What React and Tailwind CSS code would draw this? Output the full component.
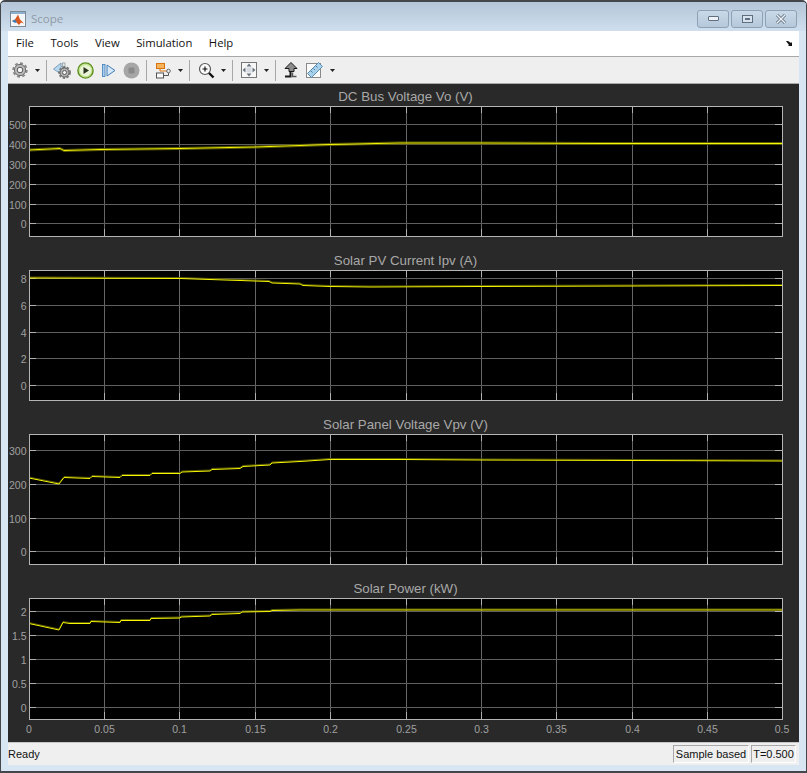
import React from "react";

const GRID_X = [104, 179, 255, 330, 406, 481, 556, 632, 707];
const LEFT = 29;
const RIGHT = 782;
const X_LABELS = ["0", "0.05", "0.1", "0.15", "0.2", "0.25", "0.3", "0.35", "0.4", "0.45", "0.5"];

const plots = [
  {
    title: "DC Bus Voltage Vo (V)",
    top: 106,
    bottom: 236,
    ticks: [["500", 124], ["400", 144], ["300", 164], ["200", 184], ["100", 204], ["0", 223]],
    zero: 223,
    ripple: [-1, 1],
    trace: [[29, 150], [60, 148.5], [64, 150.5], [100, 149.5], [180, 148.5], [255, 147], [330, 144.5], [400, 143], [480, 143], [600, 143.5], [782, 143.5]],
  },
  {
    title: "Solar PV Current Ipv (A)",
    top: 270,
    bottom: 400,
    ticks: [["8", 278], ["6", 305], ["4", 332], ["2", 358], ["0", 385]],
    zero: 385,
    ripple: [-1],
    trace: [[29, 278], [180, 278.5], [210, 279.5], [240, 280.5], [269, 281.5], [272, 283], [300, 284], [303, 285.5], [330, 286.5], [370, 287], [480, 286.5], [782, 285.5]],
  },
  {
    title: "Solar Panel Voltage Vpv (V)",
    top: 434,
    bottom: 564,
    ticks: [["300", 450], ["200", 484], ["100", 518], ["0", 551]],
    zero: 551,
    ripple: [-1],
    trace: [[29, 478], [59, 484], [64, 477.5], [90, 478.5], [92, 476.5], [120, 477.5], [122, 475.5], [150, 475.5], [152, 473.5], [180, 473.5], [182, 472], [210, 471], [212, 469.5], [240, 468.5], [243, 466.5], [270, 465], [272, 463], [300, 461.5], [330, 459.5], [400, 459.5], [480, 460], [782, 461]],
  },
  {
    title: "Solar Power (kW)",
    top: 598,
    bottom: 719,
    ticks: [["2", 611], ["1.5", 635], ["1", 659], ["0.5", 683], ["0", 707]],
    zero: 707,
    ripple: [-1],
    trace: [[29, 623.5], [59, 630], [63, 622.5], [70, 623.5], [90, 623.5], [91, 621.5], [120, 622.5], [121, 620.5], [150, 620.5], [151, 618.5], [180, 618], [181, 617], [210, 616], [212, 614.5], [240, 613.5], [242, 612], [270, 611.5], [272, 610.5], [300, 610], [782, 610]],
  },
];

function Plot({ plot, showX }) {
  const height = plot.bottom - plot.top + (showX ? 22 : 1);
  const pts = plot.trace.map((p) => p.join(",")).join(" ");
  return (
    <div>
      <div className="h-5 text-center text-[13.3px] leading-[21px] text-[#a8a8a8] pl-[21px] pr-[17px]">{plot.title}</div>
      <svg width="791" height={height} viewBox={`8 ${plot.top} 791 ${height}`} className="block" fontFamily="'Liberation Sans', sans-serif" fontSize="10.5">
        <rect x={LEFT} y={plot.top} width={RIGHT - LEFT} height={plot.bottom - plot.top} fill="#000" />
        {GRID_X.map((x) => (
          <g key={x}>
            <line x1={x + 0.5} x2={x + 0.5} y1={plot.top} y2={plot.bottom} stroke="#666" />
            <line x1={x + 0.5} x2={x + 0.5} y1={plot.top} y2={plot.top + 7} stroke="#b0b0b0" />
            <line x1={x + 0.5} x2={x + 0.5} y1={plot.bottom - 7} y2={plot.bottom} stroke="#b0b0b0" />
          </g>
        ))}
        {plot.ticks.map(([label, y]) => (
          <g key={label}>
            <line x1={LEFT} x2={RIGHT} y1={y + 0.5} y2={y + 0.5} stroke="#5e5e5e" />
            <line x1={LEFT} x2={LEFT + 7} y1={y + 0.5} y2={y + 0.5} stroke="#b0b0b0" />
            <line x1={RIGHT - 7} x2={RIGHT} y1={y + 0.5} y2={y + 0.5} stroke="#b0b0b0" />
            <text x="26.5" y={y + 5} textAnchor="end" fill="#a0a0a0">{label}</text>
          </g>
        ))}
        {plot.ripple.map((dy) => (
          <polyline key={dy} points={pts} transform={`translate(0 ${dy})`} fill="none" stroke="#5c5c08" strokeWidth="1" />
        ))}
        <polyline points={pts} fill="none" stroke="#f8f800" strokeWidth="1" />
        <line x1={LEFT + 0.5} x2={LEFT + 0.5} y1={plot.trace[0][1]} y2={plot.zero} stroke="#ffff00" />
        <rect x={LEFT + 0.5} y={plot.top + 0.5} width={RIGHT - LEFT} height={plot.bottom - plot.top} fill="none" stroke="#b4b4b4" />
        {showX &&
          X_LABELS.map((label, i) => (
            <text key={label} x={i === 0 ? LEFT : i === 10 ? RIGHT : GRID_X[i - 1] + 0.5} y={plot.bottom + 14} textAnchor="middle" fill="#a0a0a0">{label}</text>
          ))}
      </svg>
    </div>
  );
}

function Caret({ w = "w-2" }) {
  return (
    <div className={`${w} flex justify-center`}>
      <svg width="5" height="3" className="block"><path d="M0 0h5L2.5 3z" fill="#222" /></svg>
    </div>
  );
}

function Sep({ w }) {
  return (
    <div className={`${w} flex justify-center`}>
      <div className="h-[21px] w-px bg-[#a8a8a8]" />
    </div>
  );
}

function Cell({ w, children }) {
  return <div className={`${w} flex justify-center items-center`}>{children}</div>;
}

function ToolBar() {
  return (
    <div className="flex h-[27px] items-center bg-[#efefef] border-b border-[#a8a8a8]">
      <Cell w="w-6">
        <svg width="16" height="16" viewBox="0 0 16 16" className="block">
          <circle cx="8" cy="8" r="6.8" fill="none" stroke="#8a8a8a" strokeWidth="1.8" strokeDasharray="3 2.3" />
          <circle cx="8" cy="8" r="5.6" fill="#bcbcbc" stroke="#6a6a6a" />
          <circle cx="8" cy="8" r="2.8" fill="#f6f6f6" stroke="#555" />
        </svg>
      </Cell>
      <Caret w="w-2.5" />
      <Sep w="w-2" />
      <Cell w="w-6">
        <svg width="18" height="17" viewBox="0 0 18 17" className="block">
          <path d="M0.5 7L8 1v3.5h3V10H8v2z" fill="#b5d8f0" stroke="#7f9fb8" />
          <rect x="9.5" y="1" width="2.5" height="5" fill="#dfe6ec" stroke="#8a949c" strokeWidth="0.7" />
          <g transform="translate(5 4)"><circle cx="6.5" cy="6.5" r="5.6" fill="none" stroke="#777" strokeWidth="1.6" strokeDasharray="2.4 1.6" /><circle cx="6.5" cy="6.5" r="4.6" fill="#b2b2b2" stroke="#555" /><circle cx="6.5" cy="6.5" r="2" fill="#f4f4f4" stroke="#444" strokeWidth="0.8" /></g>
        </svg>
      </Cell>
      <Cell w="w-[23px]">
        <svg width="17" height="17" viewBox="0 0 17 17" className="block">
          <circle cx="8.5" cy="8.5" r="7.6" fill="#c3e394" stroke="#5f8f20" strokeWidth="1.4" />
          <circle cx="8.5" cy="8.5" r="5.6" fill="#eaf5d8" />
          <path d="M6.5 5v7l5.5-3.5z" fill="#2b3520" />
        </svg>
      </Cell>
      <Cell w="w-[23px]">
        <svg width="14" height="13" viewBox="0 0 14 13" className="block">
          <rect x="0.5" y="0.5" width="2.5" height="12" fill="#a9cfee" stroke="#3f7db8" strokeWidth="0.8" />
          <path d="M5 1v11l8-5.5z" fill="#d6e8f7" stroke="#3f7db8" />
        </svg>
      </Cell>
      <Cell w="w-[23px]">
        <svg width="17" height="17" viewBox="0 0 17 17" className="block">
          <circle cx="8.5" cy="8.5" r="8" fill="#a6a6a6" />
          <rect x="5.5" y="5.5" width="6" height="6" rx="1" fill="#8a8a8a" />
        </svg>
      </Cell>
      <Sep w="w-[7px]" />
      <Cell w="w-[26px]">
        <svg width="16" height="17" viewBox="0 0 16 17" className="block">
          <rect x="1.5" y="1.5" width="8" height="5" fill="#f5b35a" stroke="#d9730f" />
          <path d="M5 6.5V9h8" fill="none" stroke="#d9730f" />
          <circle cx="13.5" cy="9" r="1.8" fill="#eee" stroke="#666" />
          <rect x="1.5" y="11" width="7" height="5" fill="#fafafa" stroke="#555" />
          <path d="M8.5 13.5H13.5V11" fill="none" stroke="#555" />
        </svg>
      </Cell>
      <Caret />
      <Sep w="w-2.5" />
      <Cell w="w-6">
        <svg width="17" height="17" viewBox="0 0 17 17" className="block">
          <circle cx="7" cy="7" r="5.5" fill="#fbfbfb" stroke="#5a5a5a" strokeWidth="1.2" />
          <path d="M4.5 7h5M7 4.5v5" stroke="#111" strokeWidth="1.2" />
          <path d="M11 11l4.5 4.5" stroke="#111" strokeWidth="2.4" />
        </svg>
      </Cell>
      <Caret w="w-2.5" />
      <Sep w="w-2" />
      <Cell w="w-[26px]">
        <svg width="16" height="16" viewBox="0 0 16 16" className="block">
          <rect x="0.5" y="0.5" width="15" height="15" fill="#f7f7f7" stroke="#777" />
          <path d="M8 1.5l2.5 3h-5zM8 14.5l2.5-3h-5zM1.5 8l3-2.5v5zM14.5 8l-3-2.5v5z" fill="#6a7580" />
          <rect x="5.5" y="5.5" width="5" height="5" fill="#d5dbe1" />
        </svg>
      </Cell>
      <Caret />
      <Sep w="w-2.5" />
      <Cell w="w-[22px]">
        <svg width="14" height="16" viewBox="0 0 14 16" className="block">
          <path d="M1 14.5h5.5V9" fill="none" stroke="#1a1a1a" strokeWidth="2" />
          <path d="M7 0.5l6 6H10v3H5V6.5H1z" fill="#8c8c8c" stroke="#1a1a1a" strokeWidth="1" />
          <path d="M8.5 10.5v4h4" fill="none" stroke="#555" strokeWidth="1.4" />
        </svg>
      </Cell>
      <Cell w="w-6">
        <svg width="17" height="16" viewBox="0 0 17 16" className="block">
          <rect x="0.5" y="1.5" width="14" height="14" fill="#fbfbfb" stroke="#8a8a8a" />
          <path d="M1.5 11.5L12.5 0.5 16.5 4.5 5.5 15.5z" fill="#a8d2ec" stroke="#5c8db0" />
          <path d="M5 9l1.5 1.5M7.5 6.5L9 8M10 4l1.5 1.5" stroke="#4f7ea0" />
        </svg>
      </Cell>
      <Caret w="w-3" />
    </div>
  );
}

function WinBtn({ children }) {
  return (
    <div className="w-[32px] h-[18px] flex items-center justify-center rounded-[3px] border border-[#8ea2b6] bg-gradient-to-b from-[#c9d9e8] to-[#b5c8da]">
      {children}
    </div>
  );
}

export default function App() {
  return (
    <div className="relative flex h-[773px] w-[807px] flex-col overflow-hidden rounded-t-[5px] border-x border-t-2 border-b-2 border-[#43474c] bg-[#d8e6f4] font-['Liberation_Sans',sans-serif]">
      <div className="flex h-[29px] items-center bg-gradient-to-b from-[#b3c5d7] to-[#cfdfee] pl-[9px] pr-[9px] pt-[4px]">
        <svg width="16" height="16" viewBox="0 0 16 16" className="block">
          <rect x="0.5" y="0.5" width="15" height="15" fill="#f4f6f8" stroke="#7d8a96" />
          <rect x="1" y="1" width="14" height="2" fill="#8eb0d0" />
          <path d="M2 10l3-1.5L8 3.5l2 5 4 4-3-1-2 2.5-3-3z" fill="#d9571e" />
          <path d="M2 10l3-1.5 2 2.5-2 1z" fill="#3d7cb8" />
        </svg>
        <span className="ml-[5px] font-['Open_Sans',sans-serif] text-[11.5px] text-[#8f9aa5]">Scope</span>
        <div className="ml-auto flex gap-[2px]">
          <WinBtn><div className="h-[5px] w-[11px] rounded-[1px] border border-[#5f6f7f] bg-[#eef2f6]" /></WinBtn>
          <WinBtn><div className="flex h-[8px] w-[11px] items-center justify-center border border-[#5f6f7f] bg-[#d6e2ee]"><div className="h-[2px] w-[5px] bg-[#5f6f7f]" /></div></WinBtn>
          <WinBtn>
            <svg width="12" height="10" viewBox="0 0 12 10" className="block"><path d="M2 1l8 8M10 1L2 9" stroke="#5f6f7f" strokeWidth="3" /><path d="M2 1l8 8M10 1L2 9" stroke="#eef2f6" strokeWidth="1.4" /></svg>
          </WinBtn>
        </div>
      </div>
      <div className="mx-[7px] flex flex-1 flex-col">
        <div className="flex h-[26px] items-center gap-[16.5px] border-b border-[#a8a8a8] bg-white pl-2 font-['Open_Sans',sans-serif] text-[11.3px] text-[#111]">
          <span>File</span>
          <span>Tools</span>
          <span>View</span>
          <span>Simulation</span>
          <span>Help</span>
          <svg width="8" height="7" viewBox="0 0 8 7" className="ml-auto mr-[5px] block"><path d="M0 1h2l3 2 1-1v4H2l1-1z" fill="#111" /></svg>
        </div>
        <ToolBar />
        <div className="flex h-[658px] flex-col gap-[13px] bg-[#292929] pt-[2px]">
          {plots.map((p, i) => (
            <Plot key={p.title} plot={p} showX={i === 3} />
          ))}
        </div>
        <div className="flex flex-1 items-center border-t border-[#c8c8c8] bg-[#efefef] text-[11px] text-[#111]">
          <span>Ready</span>
          <div className="ml-auto flex h-[18px] w-[76px] items-center justify-center border border-t-[#a8a8a8] border-l-[#a8a8a8] border-r-white border-b-white">Sample based</div>
          <div className="ml-[2px] mr-[3px] flex h-[18px] w-[45px] items-center justify-center border border-t-[#a8a8a8] border-l-[#a8a8a8] border-r-white border-b-white">T=0.500</div>
        </div>
      </div>
      <div className="h-[6px]" />
    </div>
  );
}
